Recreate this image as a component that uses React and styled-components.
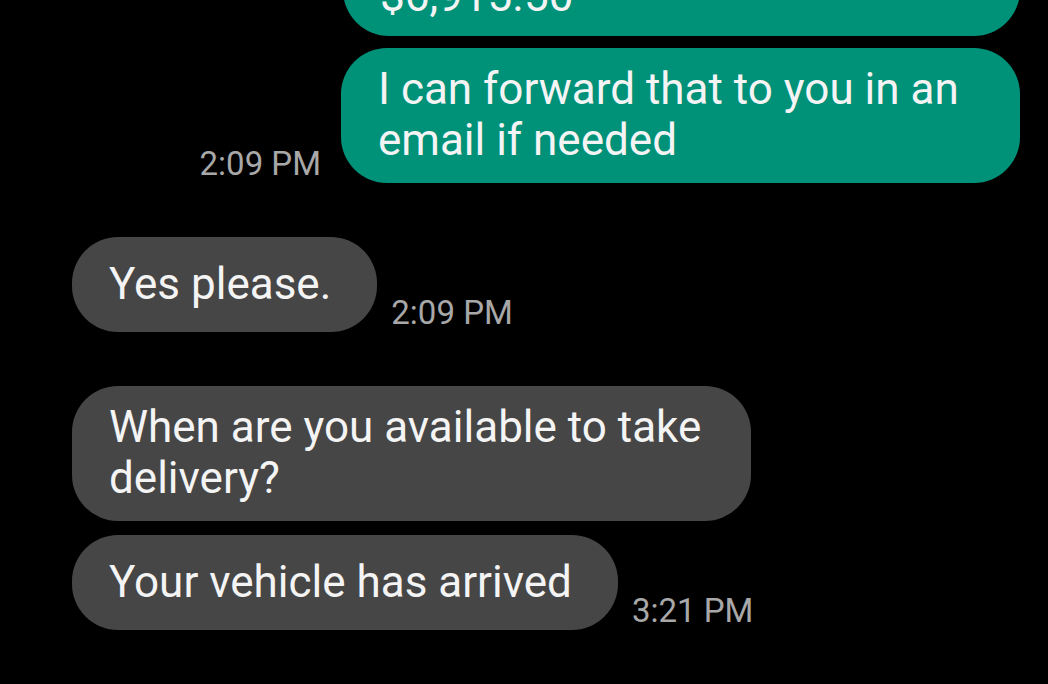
import React from 'react';
import styled, { createGlobalStyle } from 'styled-components';

const GlobalStyle = createGlobalStyle`
  html, body {
    margin: 0;
    padding: 0;
    background: #000;
  }
  body {
    font-family: Roboto, "Noto Sans", "Liberation Sans", sans-serif;
    -webkit-font-smoothing: antialiased;
  }
`;

const Screen = styled.div`
  width: 1048px;
  height: 684px;
  background: #000;
  overflow: hidden;
`;

const Thread = styled.div`
  display: flex;
  flex-direction: column;
  margin-top: -59px;
  padding: 0 28px 0 72px;
`;

const Group = styled.div`
  display: flex;
  flex-direction: column;
  gap: ${p => p.$gap || 14}px;
  margin-bottom: 54px;
`;

const Row = styled.div`
  display: flex;
  align-items: flex-end;
  justify-content: ${p => (p.$sent ? 'flex-end' : 'flex-start')};
  gap: ${p => (p.$sent ? 20 : 14)}px;
`;

const Bubble = styled.div`
  box-sizing: border-box;
  max-width: 679px;
  min-height: 95px;
  padding: 16px 46px ${p => (p.$clipped ? 14 : 17)}px 37px;
  display: flex;
  align-items: ${p => (p.$clipped ? 'flex-end' : 'center')};
  border-radius: 46px;
  background: ${p => (p.$sent ? '#009179' : '#464646')};
  color: #f4f4f4;
  font-size: 44px;
  line-height: 51px;
`;

const Time = styled.span`
  flex-shrink: 0;
  color: #a8a8a8;
  font-size: 33px;
  line-height: 33px;
  padding-bottom: 3px;
  white-space: nowrap;
`;

export default function App() {
  return (
    <Screen>
      <GlobalStyle />
      <Thread>
        <Group $gap={12}>
          <Row $sent>
            <Bubble $sent $clipped style={{ width: 677 }}>$6,915.50</Bubble>
          </Row>
          <Row $sent>
            <Time>2:09 PM</Time>
            <Bubble $sent>I can forward that to you in an email if needed</Bubble>
          </Row>
        </Group>

        <Group>
          <Row>
            <Bubble>Yes please.</Bubble>
            <Time>2:09 PM</Time>
          </Row>
        </Group>

        <Group>
          <Row>
            <Bubble>When are you available to take delivery?</Bubble>
          </Row>
          <Row>
            <Bubble>Your vehicle has arrived</Bubble>
            <Time>3:21 PM</Time>
          </Row>
        </Group>
      </Thread>
    </Screen>
  );
}
